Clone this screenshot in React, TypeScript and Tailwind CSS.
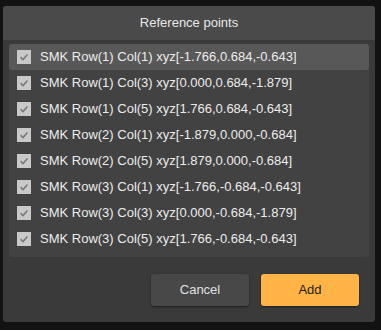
import { useState } from 'react'

const points = [
  'SMK Row(1) Col(1) xyz[-1.766,0.684,-0.643]',
  'SMK Row(1) Col(3) xyz[0.000,0.684,-1.879]',
  'SMK Row(1) Col(5) xyz[1.766,0.684,-0.643]',
  'SMK Row(2) Col(1) xyz[-1.879,0.000,-0.684]',
  'SMK Row(2) Col(5) xyz[1.879,0.000,-0.684]',
  'SMK Row(3) Col(1) xyz[-1.766,-0.684,-0.643]',
  'SMK Row(3) Col(3) xyz[0.000,-0.684,-1.879]',
  'SMK Row(3) Col(5) xyz[1.766,-0.684,-0.643]',
]

function Check({ checked }: { checked: boolean }) {
  return (
    <span className="flex h-[14px] w-[14px] items-center justify-center bg-[#c9c9c9]">
      {checked && (
        <svg width="10" height="10" viewBox="0 0 10 10" fill="none">
          <path d="M1.5 5.2 L4 7.5 L8.5 2.5" stroke="#7a7a7a" strokeWidth="1.6" />
        </svg>
      )}
    </span>
  )
}

export default function App() {
  const [checked, setChecked] = useState(points.map(() => true))

  const toggle = (i: number) => {
    setChecked(checked.map((c, j) => (j === i ? !c : c)))
  }

  return (
    <div className="h-[330px] w-[381px] bg-[#121212] pl-[3px] pt-[6px] font-['Liberation_Sans',sans-serif]">
      <div className="flex h-[316px] w-[372px] flex-col overflow-hidden rounded-[3px] bg-[#3a3a3a]">
        <div className="flex h-[34px] items-center justify-center bg-[#4a4a4a] text-[13px] text-[#e8e8e8]">
          Reference points
        </div>
        <div className="mx-[6px] mt-[4px] flex flex-col rounded-[3px] bg-[#424242] pb-[5px]">
          {points.map((p, i) => (
            <div
              key={p}
              onClick={() => toggle(i)}
              className={
                'flex h-[26px] cursor-pointer items-center gap-[9px] rounded-[3px] pl-[8px] text-[13px] text-[#ececec] ' +
                (i === 0 ? 'bg-[#585858]' : '')
              }
            >
              <Check checked={checked[i]} />
              <span>{p}</span>
            </div>
          ))}
        </div>
        <div className="mt-[17px] flex justify-end gap-[12px] pr-[16px]">
          <button className="h-[32px] w-[98px] rounded-[3px] bg-[#484848] text-[13px] text-[#e0e0e0] shadow-[0_1px_2px_rgba(0,0,0,0.5)]">
            Cancel
          </button>
          <button className="h-[32px] w-[98px] rounded-[3px] bg-[#ffb445] text-[13px] text-[#1c1c1c] shadow-[0_1px_2px_rgba(0,0,0,0.5)]">
            Add
          </button>
        </div>
      </div>
    </div>
  )
}
